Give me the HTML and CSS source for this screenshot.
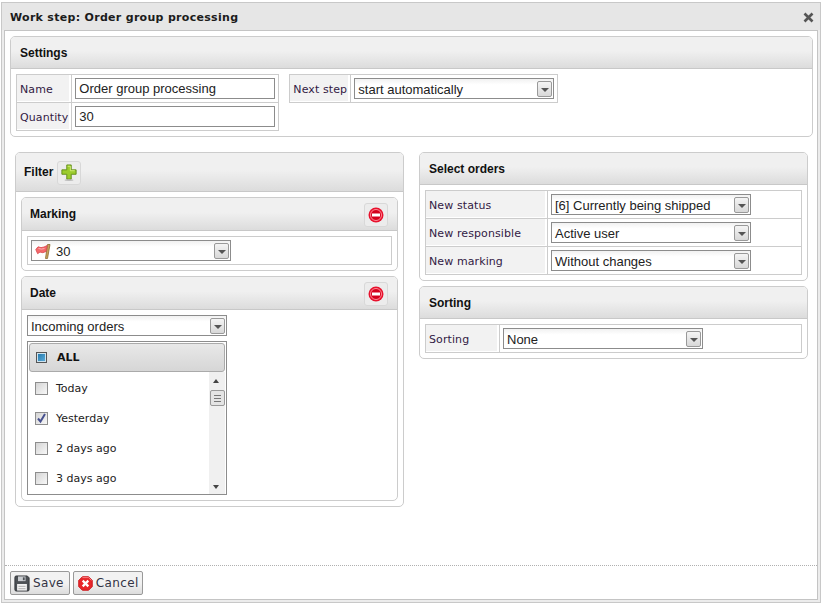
FILE: index.html
```html
<!DOCTYPE html>
<html lang="en">
<head>
    <meta charset="UTF-8">
    <title>Work step</title>
    <link rel="stylesheet" href="styles.css">
</head>
<body>
<div class="window">
    <div class="title-bar">
        <span>Work step: Order group processing</span>
        <svg class="close" width="11" height="11" viewBox="0 0 11 11"><path d="M1.500 1.500l8 8M9.500 1.500l-8 8" stroke="#555" stroke-width="2.600" fill="none"/></svg>
    </div>
    <div class="content">
        <div class="main">
            <!-- Settings -->
            <div class="panel settings">
                <div class="panel-head">Settings</div>
                <div class="settings-body">
                    <table class="form name-table">
                        <tr>
                            <td class="lbl">Name</td>
                            <td class="val"><div class="text-input">Order group processing</div></td>
                        </tr>
                        <tr>
                            <td class="lbl">Quantity</td>
                            <td class="val"><div class="text-input">30</div></td>
                        </tr>
                    </table>
                    <table class="form next-table">
                        <tr>
                            <td class="lbl">Next step</td>
                            <td class="val"><div class="select"><span>start automatically</span><i class="arrow"></i></div></td>
                        </tr>
                    </table>
                </div>
            </div>

            <div class="columns">
                <!-- Filter -->
                <div class="panel filter">
                    <div class="panel-head filter-head">
                        <span>Filter</span>
                        <div class="icon-btn">
                            <svg width="16" height="17" viewBox="0 0 18 19">
                                <path d="M6.500 1h5v5.500H17v5h-5.500V17h-5v-5.500H1v-5h5.500z" fill="#9ccc2e" stroke="#5c8a12"/>
                                <path d="M7.500 2.500h3v5h5" fill="none" stroke="#d6f07c"/>
                                <ellipse cx="9" cy="18" rx="5" ry="1" fill="#bbb"/>
                            </svg>
                        </div>
                    </div>
                    <div class="filter-body">
                        <div class="panel">
                            <div class="panel-head sub-head">
                                <span>Marking</span>
                                <div class="icon-btn">
                                    <svg width="16" height="16" viewBox="0 0 16 16"><circle cx="8" cy="8" r="7.500" fill="#e8112d"/><circle cx="8" cy="8" r="5.500" fill="#d4001c" stroke="#ff8a96"/><rect x="4" y="6.500" width="8" height="3" fill="#fff"/></svg>
                                </div>
                            </div>
                            <div class="marking-body">
                                <div class="marking-box">
                                    <div class="select">
                                        <svg class="flag" width="16" height="16" viewBox="0 0 16 16">
                                            <path d="M12.500 1.500h2.500L12.500 15.500h-2z" fill="#c9a25c" stroke="#8a6a30" stroke-width=".8"/>
                                            <path d="M.8 6.500L3 3.800l3 .8 3-.6 3.200-1.500-1.200 6-3.200 1.200-2.800-.6-2.400 1.600z" fill="#f4696c" stroke="#d9484c" stroke-width=".8"/>
                                            <path d="M3.500 5.500l3 .6 3-.6" fill="none" stroke="#fbb4b4"/>
                                        </svg>
                                        <span>30</span><i class="arrow"></i>
                                    </div>
                                </div>
                            </div>
                        </div>
                        <div class="panel date-panel">
                            <div class="panel-head sub-head">
                                <span>Date</span>
                                <div class="icon-btn">
                                    <svg width="16" height="16" viewBox="0 0 16 16"><circle cx="8" cy="8" r="7.500" fill="#e8112d"/><circle cx="8" cy="8" r="5.500" fill="#d4001c" stroke="#ff8a96"/><rect x="4" y="6.500" width="8" height="3" fill="#fff"/></svg>
                                </div>
                            </div>
                            <div class="date-body">
                                <div class="select"><span>Incoming orders</span><i class="arrow"></i></div>
                                <div class="check-list">
                                    <div class="all-row"><i class="check all"></i><b>ALL</b></div>
                                    <div class="list-rows">
                                        <ul class="items">
                                            <li><i class="check"></i>Today</li>
                                            <li>
                                                <i class="check">
                                                    <svg width="11" height="11" viewBox="0 0 11 11"><path d="M2 5.500l2.500 3L9 1" stroke="#47518f" stroke-width="2" fill="none"/></svg>
                                                </i>Yesterday
                                            </li>
                                            <li><i class="check"></i>2 days ago</li>
                                            <li><i class="check"></i>3 days ago</li>
                                        </ul>
                                        <div class="scrollbar">
                                            <i class="tri up"></i>
                                            <div class="thumb"><u></u><u></u><u></u></div>
                                            <i class="tri down"></i>
                                        </div>
                                    </div>
                                </div>
                            </div>
                        </div>
                    </div>
                </div>

                <div class="right-col">
                    <!-- Select orders -->
                    <div class="panel">
                        <div class="panel-head">Select orders</div>
                        <div class="right-body">
                            <table class="form wide">
                                <tr>
                                    <td class="lbl status-lbl">New status</td>
                                    <td class="val"><div class="select"><span>[6] Currently being shipped</span><i class="arrow"></i></div></td>
                                </tr>
                                <tr>
                                    <td class="lbl status-lbl">New responsible</td>
                                    <td class="val"><div class="select"><span>Active user</span><i class="arrow"></i></div></td>
                                </tr>
                                <tr>
                                    <td class="lbl status-lbl">New marking</td>
                                    <td class="val"><div class="select"><span>Without changes</span><i class="arrow"></i></div></td>
                                </tr>
                            </table>
                        </div>
                    </div>
                    <!-- Sorting -->
                    <div class="panel">
                        <div class="panel-head">Sorting</div>
                        <div class="right-body">
                            <table class="form wide">
                                <tr>
                                    <td class="lbl sort-lbl">Sorting</td>
                                    <td class="val"><div class="select"><span>None</span><i class="arrow"></i></div></td>
                                </tr>
                            </table>
                        </div>
                    </div>
                </div>
            </div>
        </div>

        <div class="footer">
            <button class="btn" type="button">
                <svg width="16" height="17" viewBox="0 0 18 18" preserveAspectRatio="none">
                    <path d="M1 2.500A1.500 1.500 0 0 1 2.500 1H15l2 2v12.500a1.500 1.500 0 0 1-1.500 1.500h-13A1.500 1.500 0 0 1 1 15.500z" fill="#4c5054" stroke="#33363a"/>
                    <rect x="4.500" y="1.500" width="8.500" height="5" fill="#c9ccd0"/>
                    <rect x="10" y="2.500" width="2" height="3" fill="#4c5054"/>
                    <rect x="3.500" y="9.500" width="11" height="7" fill="#f2f2f2"/>
                    <path d="M5 12h8M5 14.500h8" stroke="#aaa"/>
                </svg>
                Save
            </button>
            <button class="btn cancel" type="button">
                <svg width="15" height="15" viewBox="0 0 17 17">
                    <path d="M5 .8h7L16.200 5v7L12 16.200H5L.8 12V5z" fill="#e8262a" stroke="#c9151a"/>
                    <path d="M5 1.800h7L15.200 5" fill="none" stroke="#f7898a"/>
                    <path d="M5.300 5.300l6.400 6.400M11.700 5.300l-6.400 6.400" stroke="#fff" stroke-width="2.600" fill="none"/>
                </svg>
                Cancel
            </button>
        </div>
    </div>
</div>
</body>
</html>
```

FILE: styles.css
```css
/* Window frame */
html, body {
    margin: 0;
    padding: 0;
    background: #fff;
}

body {
    padding: 2px 0 0 1px;
    font-family: "DejaVu Sans", Verdana, sans-serif;
    font-size: 11px;
    color: #222;
}

.window {
    width: 818px;
    height: 599px;
    background: #ececec;
    border: 1px solid #c8c8c8;
    display: flex;
    flex-direction: column;
}

.title-bar {
    height: 26px;
    padding: 1px 4px 0 8px;
    background: #e6e6e6;
    display: flex;
    align-items: center;
    justify-content: space-between;
    font-weight: bold;
    font-size: 11px;
    color: #1c1c1c;
    letter-spacing: 0.3px;
}

.close {
    margin-right: 2px;
}

.content {
    flex: 1;
    margin: 0 2px 2px;
    background: #fff;
    border: 1px solid #c4c4c4;
    display: flex;
    flex-direction: column;
    min-height: 0;
}

.main {
    flex: 1;
    padding: 5px 4px 0 5px;
}

/* Panels */
.panel {
    border: 1px solid #ccc;
    border-radius: 5px;
    background: #fff;
}

.panel-head {
    height: 30px;
    line-height: 31px;
    padding: 1px 0 0 9px;
    background: linear-gradient(#f0f0f0 0%, #f0f0f0 45%, #dcdcdc 100%);
    border-bottom: 1px solid #c8c8c8;
    border-radius: 4px 4px 0 0;
    font-family: "Liberation Sans", Arial, sans-serif;
    font-size: 12px;
    font-weight: bold;
    color: #111;
}

.settings-body {
    display: flex;
    align-items: flex-start;
    gap: 10px;
    padding: 5px;
}

.columns {
    display: flex;
    gap: 15px;
    margin: 15px 5px 0;
    align-items: flex-start;
}

.filter {
    width: 387px;
    flex: none;
}

.filter-head {
    height: 37px;
    display: flex;
    align-items: center;
    gap: 4px;
    padding-left: 8px;
}

.filter-body {
    padding: 5px;
}

.sub-head {
    height: 31px;
    display: flex;
    align-items: center;
    justify-content: space-between;
    padding: 1px 9px 0 8px;
}

.date-panel {
    margin-top: 5px;
}

.icon-btn {
    width: 22px;
    height: 22px;
    border: 1px solid #d8d8d8;
    border-radius: 3px;
    background: #ececec;
    display: flex;
    align-items: center;
    justify-content: center;
}

.marking-body {
    padding: 5px;
}

.marking-box {
    border: 1px solid #ccc;
    padding: 3px;
}

.date-body {
    padding: 5px;
}

.right-col {
    flex: 1;
    min-width: 0;
    display: flex;
    flex-direction: column;
    gap: 5px;
}

.right-body {
    padding: 5px;
}

/* Form tables */
.form {
    border-collapse: collapse;
}

.form td {
    border: 1px solid #ccc;
    height: 27px;
    padding: 0;
}

.form td.lbl {
    height: 25px;
    padding: 2px 3px 0;
    background: #f2f2f2;
    background-clip: padding-box;
    white-space: nowrap;
    color: #331a44;
    letter-spacing: 0.1px;
    box-shadow: inset -2px 0 0 #fff, inset 0 -1px 0 #fff;
}

.form td.status-lbl {
    width: 112px;
    padding-right: 6px;
}

.form td.sort-lbl {
    width: 64px;
    padding-right: 6px;
}

.form td.val {
    padding: 0 3px;
}

.form.wide {
    width: 100%;
    table-layout: fixed;
}

.next-table td.lbl {
    width: 54px;
}

.text-input {
    width: 195px;
    height: 19px;
    line-height: 20px;
    padding-left: 3px;
    border: 1px solid #8c8c8c;
    font-family: "Liberation Sans", Arial, sans-serif;
    font-size: 13px;
    color: #222;
}

.select {
    width: 195px;
    height: 19px;
    border: 1px solid #8c8c8c;
    background: linear-gradient(#f1f1f1, #fff 30%);
    display: flex;
    align-items: center;
    padding-left: 3px;
    font-family: "Liberation Sans", Arial, sans-serif;
    font-size: 13px;
    color: #222;
}

.select span {
    flex: 1;
    padding-top: 1px;
}

.flag {
    margin-right: 5px;
}

.arrow {
    width: 13px;
    height: 14px;
    margin-right: 1px;
    border: 1px solid #999;
    border-radius: 2px;
    background: linear-gradient(#f4f4f4, #d8d8d8);
    display: block;
    position: relative;
}

.arrow::after {
    content: "";
    position: absolute;
    left: 3px;
    top: 6px;
    border-left: 4px solid transparent;
    border-right: 4px solid transparent;
    border-top: 4px solid #555;
}

/* Date check list */
.check-list {
    margin-top: 5px;
    width: 198px;
    height: 151px;
    border: 1px solid #8c8c8c;
    padding: 1px 0 0;
    font-size: 11px;
    color: #222;
}

.all-row {
    margin: 0 1px;
    height: 29px;
    border: 1px solid #aaa;
    border-radius: 3px;
    background: linear-gradient(#e8e8e8, #d6d6d6);
    display: flex;
    align-items: center;
    padding-left: 5px;
    box-sizing: border-box;
}

.all-row b {
    color: #111;
}

.check {
    width: 11px;
    height: 11px;
    flex: none;
    display: inline-block;
    border: 1px solid #8e8e8e;
    background: linear-gradient(135deg, #d4d4d4, #f8f8f8);
    margin-right: 8px;
}

.check.all {
    width: 9px;
    height: 9px;
    background: linear-gradient(135deg, #1f74a8, #60b0dd);
    margin-left: 1px;
    margin-right: 10px;
    border-color: #555;
    box-shadow: inset 0 0 0 1px #cfe3ee;
}

.list-rows {
    display: flex;
    height: 122px;
}

.items {
    list-style: none;
    margin: 0;
    padding: 0 0 0 7px;
    flex: 1;
}

.items li {
    height: 30px;
    display: flex;
    align-items: center;
    position: relative;
    top: 1px;
}

.items svg {
    display: block;
}

.scrollbar {
    width: 16px;
    background: #f0f0f0;
    margin-right: 1px;
    position: relative;
}

.tri {
    position: absolute;
    left: 4px;
    border-left: 3.500px solid transparent;
    border-right: 3.500px solid transparent;
}

.tri.up {
    top: 7px;
    border-bottom: 4px solid #444;
}

.tri.down {
    bottom: 5px;
    border-top: 4px solid #444;
}

.thumb {
    position: absolute;
    top: 18px;
    left: 1px;
    width: 13px;
    height: 14px;
    border: 1px solid #999;
    border-radius: 2px;
    background: #e4e4e4;
    display: flex;
    flex-direction: column;
    justify-content: center;
    gap: 2px;
    align-items: center;
}

.thumb u {
    display: block;
    width: 7px;
    height: 1px;
    background: #777;
}

/* Footer */
.footer {
    height: 28px;
    border-top: 1px dotted #b0b0b0;
    padding: 5px 0 0 5px;
    display: flex;
    gap: 3px;
    align-items: flex-start;
}

.btn {
    height: 24px;
    padding: 0 5px 0 3px;
    margin: 0;
    border: 1px solid #999;
    border-radius: 2px;
    background: linear-gradient(#f2f2f2 50%, #dcdcdc 100%);
    display: flex;
    align-items: center;
    gap: 3px;
    font-family: "DejaVu Sans", Verdana, sans-serif;
    font-size: 12px;
    letter-spacing: 0.35px;
    color: #334;
}

.btn.cancel {
    padding: 0 3px 0 4px;
}
```
